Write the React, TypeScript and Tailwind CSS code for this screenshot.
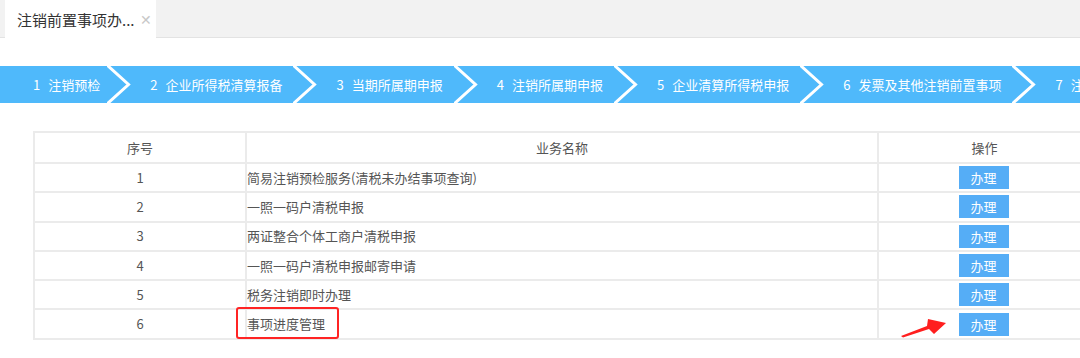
import React from "react";

const steps = [
  "注销预检",
  "企业所得税清算报备",
  "当期所属期申报",
  "注销所属期申报",
  "企业清算所得税申报",
  "发票及其他注销前置事项",
  "注销税务登记",
];

const rows = [
  "简易注销预检服务(清税未办结事项查询)",
  "一照一码户清税申报",
  "两证整合个体工商户清税申报",
  "一照一码户清税申报邮寄申请",
  "税务注销即时办理",
  "事项进度管理",
];

const Chevron = () => (
  <svg width="24" height="37" viewBox="0 0 24 37" className="shrink-0">
    <polyline
      points="0,-1 21.5,18.5 0,38"
      fill="none"
      stroke="#ffffff"
      strokeWidth="3"
    />
  </svg>
);

const RedArrow = () => (
  <svg
    width="48"
    height="22"
    viewBox="0 0 48 22"
    className="absolute left-[21px] top-[3px]"
  >
    <polygon
      points="1,20 27,10 28,3 46,7 34,18 29,13 3,21.5"
      fill="#ff1f1f"
    />
  </svg>
);

export default function App() {
  return (
    <div
      className="w-[1080px] h-[358px] overflow-hidden bg-white"
      style={{ fontFamily: '"Noto Sans CJK SC", "Noto Sans", sans-serif' }}
    >
      {/* tab bar */}
      <div className="h-[38px] bg-[#f2f2f2] border-b border-[#e3e3e3] flex pl-[5px]">
        <div className="h-[38px] w-[151px] bg-white flex items-center pl-[12px] -mb-px">
          <span className="text-[15px] text-[#333] leading-none">注销前置事项办...</span>
          <span className="ml-[5px] text-[14px] text-[#c8c8c8] leading-none">✕</span>
        </div>
      </div>

      {/* steps */}
      <div className="mt-[28px] h-[37px] bg-[#4fb9fb] flex items-center whitespace-nowrap">
        {steps.map((s, i) => (
          <React.Fragment key={i}>
            {i > 0 && <Chevron />}
            <div
              className={
                "flex items-center text-[13px] text-white shrink-0 " +
                (i === 0 ? "pl-[33px] pr-[7px]" : "pl-[19px] pr-[11px]")
              }
            >
              <span className="mr-[8px]">{i + 1}</span>
              <span>{s}</span>
            </div>
          </React.Fragment>
        ))}
      </div>

      {/* table */}
      <table className="mt-[28px] ml-[33px] w-[1057px] table-fixed border-collapse text-[13px] text-[#555]">
        <colgroup>
          <col className="w-[212px]" />
          <col className="w-[632px]" />
          <col className="w-[213px]" />
        </colgroup>
        <thead>
          <tr className="h-[31px]">
            <th className="border-2 border-[#ebebeb] font-normal">序号</th>
            <th className="border-2 border-[#ebebeb] font-normal">业务名称</th>
            <th className="border-2 border-[#ebebeb] font-normal">操作</th>
          </tr>
        </thead>
        <tbody>
          {rows.map((r, i) => (
            <tr key={i} className="h-[29.3px]">
              <td className="border-2 border-[#ebebeb] text-center p-0">{i + 1}</td>
              <td className="border-2 border-[#ebebeb] p-0">
                {i === 5 ? (
                  <span className="relative inline-block">
                    {r}
                    <span className="absolute -left-[11px] -right-[14px] -top-[7px] -bottom-[5px] border-2 border-[#ff2424] rounded-[3px]" />
                  </span>
                ) : (
                  r
                )}
              </td>
              <td className="border-2 border-[#ebebeb] p-0">
                <div className="relative flex justify-center">
                  {i === 5 && <RedArrow />}
                  <button className="w-[50px] h-[23px] bg-[#55adf6] text-white text-[13px] leading-none -ml-[2px]">
                    办理
                  </button>
                </div>
              </td>
            </tr>
          ))}
        </tbody>
      </table>
    </div>
  );
}
